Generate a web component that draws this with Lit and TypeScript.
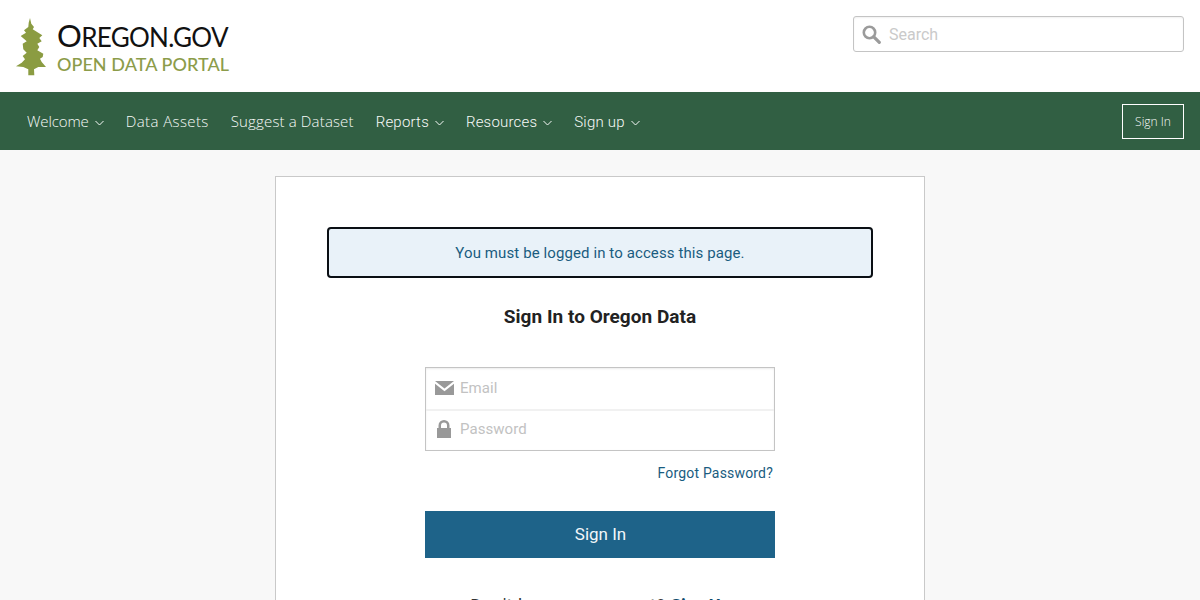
import { LitElement, html, css } from 'lit';
import { customElement } from 'lit/decorators.js';

const chevron = html`<svg class="chev" width="9" height="6" viewBox="0 0 9 6"><path d="M.5 1l4 4 4-4" fill="none" stroke="currentColor" stroke-width="1"/></svg>`;

const navItems = [
  { label: 'Welcome', drop: true, alt: false },
  { label: 'Data Assets', drop: false, alt: false },
  { label: 'Suggest a Dataset', drop: false, alt: false },
  { label: 'Reports', drop: true, alt: true },
  { label: 'Resources', drop: true, alt: true },
  { label: 'Sign up', drop: true, alt: true },
];

@customElement('app-root')
export class AppRoot extends LitElement {
  static styles = css`
    :host {
      display: block;
      height: 600px;
      overflow: hidden;
      background: #f8f8f8;
      font-family: Roboto, "Liberation Sans", sans-serif;
    }
    * { box-sizing: border-box; }
    .top {
      height: 92px;
      background: #fff;
      display: flex;
      justify-content: space-between;
      padding: 16px 16px 0 15px;
    }
    .logo { display: flex; gap: 10px; height: 62px; padding-top: 2px; }
    .logo-text { display: flex; flex-direction: column; }
    .logo-main {
      font: 400 26px/35px Lato, sans-serif;
      color: #111;
      letter-spacing: -.7px;
      white-space: nowrap;
    }
    .logo-main span { font-size: 31px; }
    .logo-sub {
      font: 500 18px/18px Lato, sans-serif;
      color: #8c9c4a;
      letter-spacing: .05px;
      white-space: nowrap;
    }
    .search {
      width: 331px;
      height: 36px;
      border: 1px solid #c4c4c4;
      border-radius: 3px;
      display: flex;
      align-items: center;
      gap: 8px;
      padding-left: 8px;
      background: #fff;
      box-shadow: inset 0 1px 2px rgba(0,0,0,.06);
      color: #cacaca;
      font-size: 16px;
    }
    nav {
      height: 58px;
      background: #315f43;
      display: flex;
      align-items: center;
      padding: 0 16px 0 27px;
      color: #f7faf8;
      font: 300 15px "Open Sans", sans-serif;
    }
    .items { display: flex; gap: 22px; flex: 1; }
    .item { display: flex; align-items: center; gap: 6px; white-space: nowrap; letter-spacing: .15px; }
    .item:first-child { letter-spacing: -.1px; }
    .item:nth-child(2) { letter-spacing: .4px; }
    .item.alt { font: 300 15px Roboto, sans-serif; letter-spacing: .2px; padding-top: 1px; }
    .chev { margin-top: 3px; }
    .nav-btn {
      width: 62px;
      height: 35px;
      border: 1px solid #fff;
      display: flex;
      align-items: center;
      justify-content: center;
      font-size: 12px;
    }
    main { display: flex; justify-content: center; padding-top: 26px; }
    .card {
      width: 650px;
      height: 500px;
      background: #fff;
      border: 1px solid #c9c9c9;
      padding: 50px 51px 0;
      display: flex;
      flex-direction: column;
      align-items: center;
    }
    .alert {
      width: 100%;
      height: 51px;
      border: 2px solid #0a0f14;
      border-radius: 4px;
      background: #e9f2f9;
      color: #1a5c80;
      font-size: 15px;
      padding-top: 1px;
      display: flex;
      align-items: center;
      justify-content: center;
      letter-spacing: .1px;
    }
    h1 {
      margin: 27px 0 0;
      font-size: 19px;
      line-height: 24px;
      font-weight: 700;
      color: #222;
      letter-spacing: .03px;
    }
    .form { width: 350px; margin-top: 38px; display: flex; flex-direction: column; }
    .fields { border: 1px solid #c4c4c4; height: 84px; box-shadow: inset 0 1px 2px rgba(0,0,0,.08); }
    .field {
      height: 41px;
      display: flex;
      align-items: center;
      color: #c2c2c2;
      font-size: 15px;
      letter-spacing: .05px;
      gap: 6px;
      padding: 0 0 2px 8px;
    }
    .field + .field { border-top: 2px solid #f1f1f1; padding-bottom: 3px; }
    .field-icon { width: 20px; display: flex; justify-content: center; }
    .forgot {
      text-align: right;
      margin-top: 13px;
      padding-right: 2px;
      color: #1a5c80;
      font-size: 14px;
      line-height: 18px;
      letter-spacing: .18px;
    }
    .submit {
      margin-top: 29px;
      height: 47px;
      background: #1e6389;
      color: #f2f7fa;
      font-size: 17px;
      padding: 0 0 1px 1px;
      display: flex;
      align-items: center;
      justify-content: center;
    }
    .signup {
      margin-top: 38px;
      font-size: 18px;
      line-height: 20px;
      color: #333;
      letter-spacing: .5px;
    }
    .signup b { color: #0e4a6b; font-weight: 700; letter-spacing: -.5px; }
  `;

  render() {
    return html`
      <header class="top">
        <div class="logo">
          <svg width="32" height="58" viewBox="0 0 32 58">
            <path fill="#8b9c42" d="M15 0l1.300 5.700L19 9l-1.300 2.300 5.600 3.400 4 2.600-3 2.700 2.400 3.300-4.400 2.400 2 3.300-2 3.300 6 3.400-.6 3.300-2.700 1.700 1.700 3.300 4.300 5h-7.700L19 51.300l.3 6h-6v-6l-5-2.300-7.300-.7 5.700-3.600 3.300-3.400L7.700 38l4-3.300-3.400-3.400-.6-5.600 4-2.400-6-5.300 5.300-3.300-2-2.400L13.300 9l.4-4.300z"/>
          </svg>
          <div class="logo-text">
            <div class="logo-main"><span>O</span>REGON.GOV</div>
            <div class="logo-sub">OPEN DATA PORTAL</div>
          </div>
        </div>
        <div class="search">
          <svg width="19" height="19" viewBox="0 0 19 19">
            <circle cx="7.500" cy="7.500" r="5.700" fill="none" stroke="#9b9b9b" stroke-width="2.600"/>
            <path d="M11.800 11.800l5.500 5.500" stroke="#9b9b9b" stroke-width="3.200" stroke-linecap="round"/>
          </svg>
          <span>Search</span>
        </div>
      </header>
      <nav>
        <div class="items">
          ${navItems.map((n) => html`<div class="item ${n.alt ? 'alt' : ''}">${n.label}${n.drop ? chevron : ''}</div>`)}
        </div>
        <div class="nav-btn">Sign In</div>
      </nav>
      <main>
        <section class="card">
          <div class="alert">You must be logged in to access this page.</div>
          <h1>Sign In to Oregon Data</h1>
          <div class="form">
            <div class="fields">
              <div class="field">
                <span class="field-icon">
                  <svg width="19" height="14" viewBox="0 0 19 14"><path fill="#999" d="M0 0h19L9.500 7.500zM0 2.800l9.500 7.400 9.500-7.400V14H0z"/></svg>
                </span>
                <span>Email</span>
              </div>
              <div class="field">
                <span class="field-icon">
                  <svg width="14" height="18" viewBox="0 0 14 18"><path fill="#999" d="M0 8h1.500V5.500a5.500 5.500 0 0 1 11 0V8H14v10H0zM4 8h6V5.500a3 3 0 0 0-6 0z"/></svg>
                </span>
                <span>Password</span>
              </div>
            </div>
            <div class="forgot">Forgot Password?</div>
            <div class="submit">Sign In</div>
          </div>
          <div class="signup">Don't have an account? <b>Sign Up</b></div>
        </section>
      </main>
    `;
  }
}
